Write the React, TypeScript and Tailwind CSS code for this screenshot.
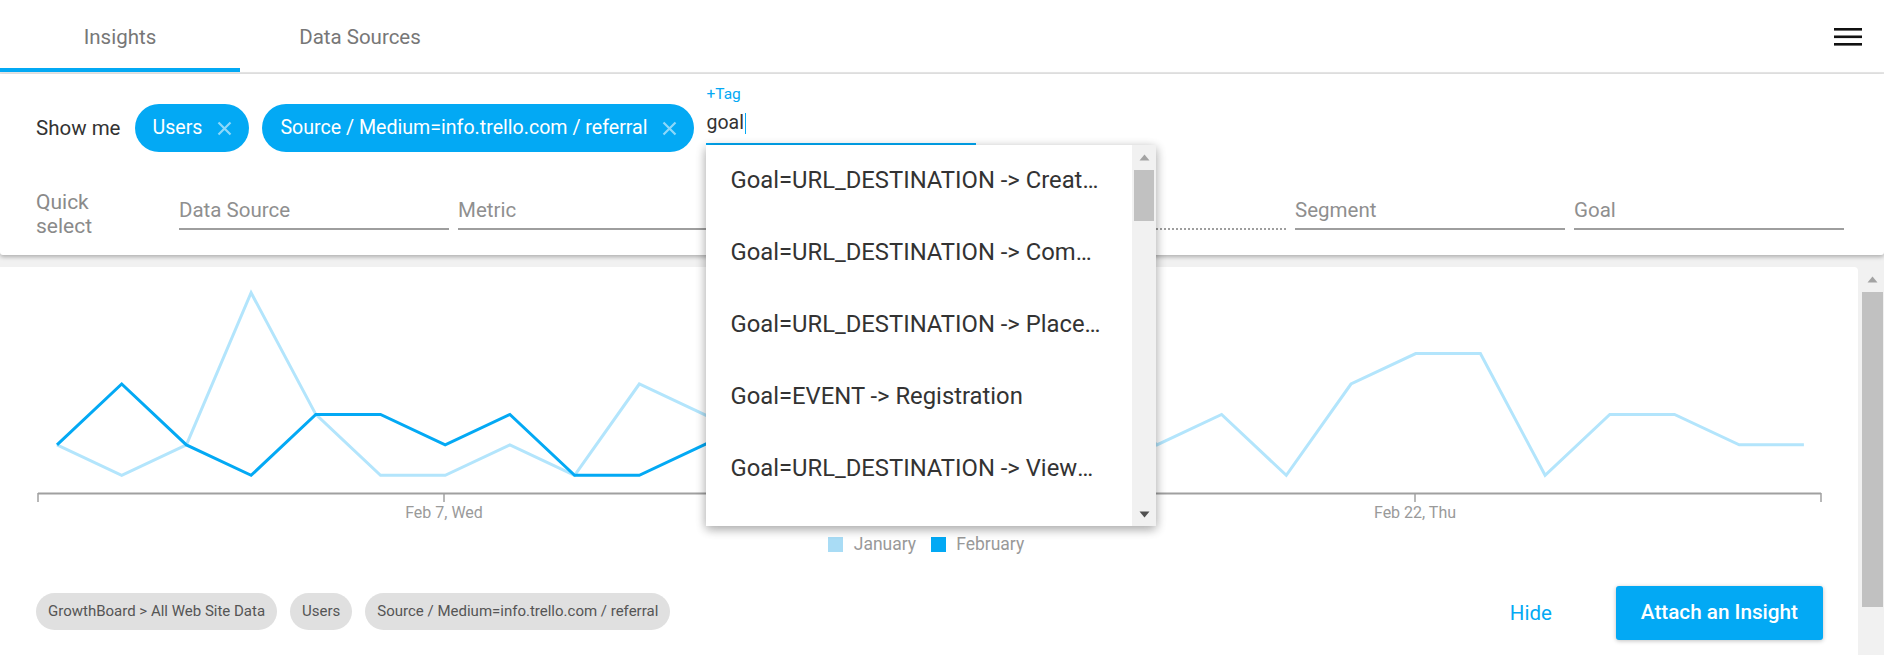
import React from "react";

// January is the comparison series, February the current one (ends early).
const JANUARY = [1, 0, 1, 6, 2, 0, 0, 1, 0, 3, 2, 1, 2, 0, 1, 2, 3, 1, 2, 0, 3, 4, 4, 0, 2, 2, 1, 1];
const FEBRUARY = [1, 3, 1, 0, 2, 2, 1, 2, 0, 0, 1, 2, 1, 1];

const SUGGESTIONS = [
  "Goal=URL_DESTINATION -> Created Board",
  "Goal=URL_DESTINATION -> Completed Signup",
  "Goal=URL_DESTINATION -> Placed Order",
  "Goal=EVENT -> Registration",
  "Goal=URL_DESTINATION -> Viewed Pricing",
];

const QUICK_FIELDS = [
  { label: "Data Source" },
  { label: "Metric" },
  { label: "Dimension" },
  { label: "Value", disabled: true },
  { label: "Segment" },
  { label: "Goal" },
];

const px = (i: number) => 57 + 64.7 * i;
const py = (k: number) => 475.3 - 30.43 * k;
const toPoints = (values: number[]) => values.map((v, i) => `${px(i)},${py(v)}`).join(" ");

function Tab({ label, active = false }: { label: string; active?: boolean }) {
  return (
    <div className="flex w-[240px] flex-col">
      <div className="flex flex-1 items-center justify-center pt-[6px] text-[20.5px] text-[#777]">{label}</div>
      <div className={active ? "h-[4px] bg-[#03a9f4]" : "h-[4px]"} />
    </div>
  );
}

function ChipX() {
  return (
    <svg width="15" height="15" viewBox="0 0 15 15" className="shrink-0">
      <path d="M1.5 1.5L13.5 13.5M13.5 1.5L1.5 13.5" stroke="rgba(255,255,255,0.55)" strokeWidth="2.2" />
    </svg>
  );
}

function Chip({ children }: { children: React.ReactNode }) {
  return (
    <div className="flex h-[48px] items-center gap-[15px] rounded-full bg-[#03a9f4] pl-[18px] pr-[17px] text-[19.6px] text-white">
      <span>{children}</span>
      <ChipX />
    </div>
  );
}

function Triangle({ up, color }: { up: boolean; color: string }) {
  return (
    <svg width="11" height="7" viewBox="0 0 11 7">
      <polygon points={up ? "5.5,0.5 10.5,6.5 0.5,6.5" : "0.5,0.5 10.5,0.5 5.5,6.5"} fill={color} />
    </svg>
  );
}

function SuggestionMenu() {
  return (
    <div className="absolute left-0 top-[59px] z-30 flex h-[381px] w-[450px] bg-white shadow-[0_3px_10px_rgba(0,0,0,0.16),0_3px_10px_rgba(0,0,0,0.23)]">
      <ul className="flex min-w-0 flex-1 flex-col">
        {SUGGESTIONS.map((s) => (
          <li key={s} className="flex h-[72px] shrink-0 items-center pl-[24px] pr-[29px] text-[23.8px] text-[#333]">
            <span className="min-w-0 truncate">{s}</span>
          </li>
        ))}
      </ul>
      <div className="flex w-[24px] flex-col bg-[#f1f1f1]">
        <div className="flex h-[25px] items-center justify-center">
          <Triangle up color="#a3a3a3" />
        </div>
        <div className="mx-[2px] h-[51px] bg-[#c1c1c1]" />
        <div className="mt-auto flex h-[24px] items-center justify-center">
          <Triangle up={false} color="#505050" />
        </div>
      </div>
    </div>
  );
}

function TagInput() {
  return (
    <div className="relative ml-[12px] w-[270px]">
      <div className="h-[17px] text-[15.5px] leading-[17px] text-[#03a9f4]">+Tag</div>
      <div className="flex h-[40px] items-center text-[19.5px] text-[#333]">
        goal
        <span className="ml-[1px] h-[21px] w-[1.5px] bg-[#03a9f4]" />
      </div>
      <div className="h-[2px] bg-[#03a9f4]" />
      <SuggestionMenu />
    </div>
  );
}

function QuickField({ label, disabled }: { label: string; disabled?: boolean }) {
  return (
    <div className="flex w-[270px] flex-col">
      <div className="flex h-[36px] items-center text-[20.5px] text-[#8f8f8f]">{disabled ? "" : label}</div>
      {disabled ? (
        <div className="h-[2px] border-b-2 border-dotted border-[#9e9e9e]" />
      ) : (
        <div className="h-[2px] bg-[#9e9e9e]" />
      )}
    </div>
  );
}

function Chart() {
  return (
    <svg width="1858" height="258" viewBox="0 267 1858 258" className="block">
      <polyline points={toPoints(JANUARY)} fill="none" stroke="#b3e5fc" strokeWidth="3" strokeLinejoin="miter" />
      <polyline points={toPoints(FEBRUARY)} fill="none" stroke="#03a9f4" strokeWidth="3" strokeLinejoin="miter" />
      <line x1="38" y1="493.5" x2="1821" y2="493.5" stroke="#a0a0a0" strokeWidth="2" />
      {[38, 444, 1415, 1821].map((x) => (
        <line key={x} x1={x} y1="493" x2={x} y2="502" stroke="#a0a0a0" strokeWidth="1.5" />
      ))}
      <text x="444" y="518" textAnchor="middle" fontSize="16" fill="#9a9a9a" fontFamily="Roboto, sans-serif">
        Feb 7, Wed
      </text>
      <text x="1415" y="518" textAnchor="middle" fontSize="16" fill="#9a9a9a" fontFamily="Roboto, sans-serif">
        Feb 22, Thu
      </text>
    </svg>
  );
}

function TagChip({ children }: { children: React.ReactNode }) {
  return (
    <span className="flex h-[37px] items-center rounded-full bg-[#e0e0e0] px-[12px] text-[15px] text-[#555]">
      {children}
    </span>
  );
}

export default function App() {
  return (
    <div className="relative h-[655px] w-full overflow-hidden bg-[#f1f1f1] font-['Roboto',sans-serif]">
      <header className="flex h-[74px] border-b-2 border-[#e6e6e6] bg-white">
        <Tab label="Insights" active />
        <Tab label="Data Sources" />
        <button className="ml-auto mr-[22px] mt-[28px] self-start">
          <svg width="28" height="18" viewBox="0 0 28 18">
            <rect x="0" y="0" width="28" height="2.6" fill="#111" />
            <rect x="0" y="7.5" width="28" height="2.6" fill="#111" />
            <rect x="0" y="15" width="28" height="2.6" fill="#111" />
          </svg>
        </button>
      </header>

      <section className="relative z-20 h-[181px] rounded-b-[3px] bg-white px-[36px] pt-[12px] shadow-[0_2px_4px_rgba(0,0,0,0.28)]">
        <div className="flex h-[66px] items-start">
          <div className="mt-[18px] flex h-[48px] items-center gap-[13px]">
            <span className="mr-[1px] text-[20.5px] text-[#333]">Show me</span>
            <Chip>Users</Chip>
            <Chip>Source / Medium=info.trello.com / referral</Chip>
          </div>
          <TagInput />
        </div>
        <div className="mt-[38px] flex h-[48px] items-start">
          <div className="w-[143px] text-[21px] leading-[24px] text-[#8a8a8a]">
            Quick
            <br />
            select
          </div>
          <div className="mt-[2px] flex gap-[9px]">
            {QUICK_FIELDS.map((f) => (
              <QuickField key={f.label} label={f.label} disabled={f.disabled} />
            ))}
          </div>
        </div>
      </section>

      <div className="flex h-[400px] gap-[3px] pt-[12px]">
        <div className="flex-1 rounded-tr-[4px] bg-white">
          <Chart />
          <div className="mt-[9px] flex h-[20px] items-center justify-center pr-[6px] text-[17.5px] text-[#999]">
            <span className="h-[15px] w-[15px] bg-[#a9dcf5]" />
            <span className="ml-[11px]">January</span>
            <span className="ml-[15px] h-[15px] w-[15px] bg-[#03a9f4]" />
            <span className="ml-[10px]">February</span>
          </div>
          <div className="mt-[32px] flex h-[54px] items-center pl-[36px] pr-[35px]">
            <div className="mb-[4px] flex gap-[13px]">
              <TagChip>GrowthBoard &gt; All Web Site Data</TagChip>
              <TagChip>Users</TagChip>
              <TagChip>Source / Medium=info.trello.com / referral</TagChip>
            </div>
            <button className="ml-auto mr-[64px] text-[20.5px] text-[#03a9f4]">Hide</button>
            <button className="h-[54px] rounded-[3px] bg-[#03a9f4] px-[25px] text-[20.7px] font-medium text-white shadow-[0_1px_4px_rgba(0,0,0,0.25)]">
              Attach an Insight
            </button>
          </div>
        </div>
        <div className="flex w-[23px] flex-col bg-[#f1f1f1]">
          <div className="flex h-[24px] items-center justify-center">
            <Triangle up color="#a3a3a3" />
          </div>
          <div className="mx-[1px] mt-[1px] h-[315px] bg-[#c1c1c1]" />
        </div>
      </div>
    </div>
  );
}
